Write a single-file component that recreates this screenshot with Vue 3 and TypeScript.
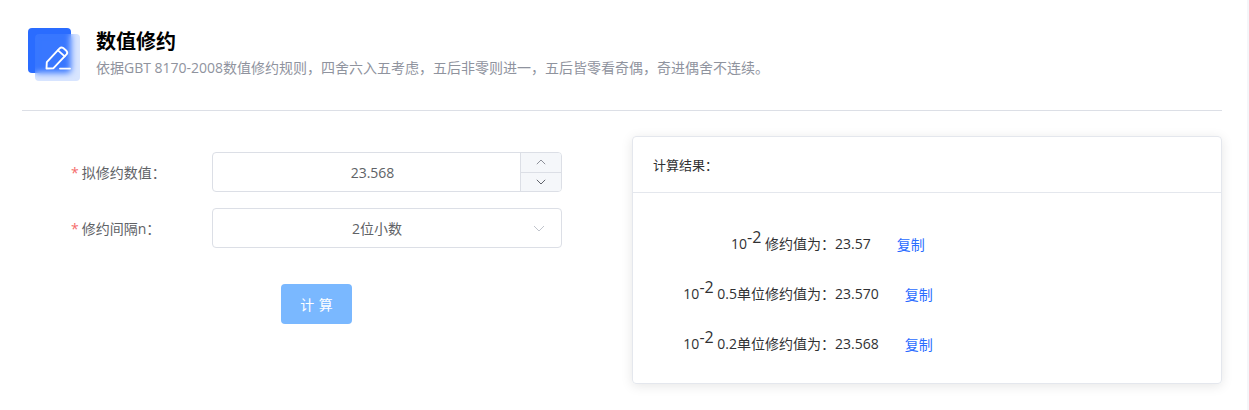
<script setup lang="ts">
interface Row { unit: string; value: string }
const rows: Row[] = [
  { unit: '修约值为\uFF1A', value: '23.57' },
  { unit: '0.5单位修约值为\uFF1A', value: '23.570' },
  { unit: '0.2单位修约值为\uFF1A', value: '23.568' },
]
</script>

<template>
  <div class="page">
    <header class="head">
      <div class="logo">
        <div class="logo-back"></div>
        <div class="logo-front">
          <svg width="28" height="28" viewBox="0 0 28 28" fill="none" stroke="#fff" stroke-width="1.9" stroke-linejoin="round" stroke-linecap="round">
            <path d="M2.5 24.5 L2.8 18.2 L15.6 4.4 Q17.3 2.7 19.2 4.1 L22.4 6.8 Q24.1 8.6 22.5 10.4 L9.5 24.2 Z" />
            <path d="M14 6.4 L20.7 12.4" />
            <path d="M16 24.6 H26" />
          </svg>
        </div>
      </div>
      <div class="head-text">
        <h1>数值修约</h1>
        <p>依据GBT 8170-2008数值修约规则&#xFF0C;四舍六入五考虑&#xFF0C;五后非零则进一&#xFF0C;五后皆零看奇偶&#xFF0C;奇进偶舍不连续。</p>
      </div>
    </header>

    <main class="body">
      <form class="form" @submit.prevent>
        <div class="field">
          <label><span class="star">*</span>拟修约数值&#xFF1A;</label>
          <div class="control number">
            <span class="val">23.568</span>
            <div class="steps">
              <button type="button" class="step">
                <svg width="10" height="6" viewBox="0 0 10 6" fill="none" stroke="#8d9099" stroke-width="1"><path d="M.8 5.2 5 1l4.2 4.2" /></svg>
              </button>
              <button type="button" class="step">
                <svg width="10" height="6" viewBox="0 0 10 6" fill="none" stroke="#60636b" stroke-width="1"><path d="M.8.8 5 5 9.2.8" /></svg>
              </button>
            </div>
          </div>
        </div>
        <div class="field">
          <label><span class="star">*</span>修约间隔n&#xFF1A;</label>
          <div class="control select">
            <span class="val">2位小数</span>
            <svg class="caret" width="12" height="7" viewBox="0 0 12 7" fill="none" stroke="#c0c4cc" stroke-width="1"><path d="M1 1l5 5 5-5" /></svg>
          </div>
        </div>
        <button type="button" class="submit">计 算</button>
      </form>

      <section class="card">
        <div class="card-head">计算结果&#xFF1A;</div>
        <div class="card-body">
          <div v-for="r in rows" :key="r.unit" class="row">
            <span class="label">10<sup>-2</sup> {{ r.unit }}</span>
            <span class="value">{{ r.value }}</span>
            <a class="copy">复制</a>
          </div>
        </div>
      </section>
    </main>
  </div>
</template>

<style scoped>
.page {
  box-sizing: border-box;
  width: 1249px;
  height: 410px;
  overflow: hidden;
  padding: 0 25px 0 22px;
  border-right: 2px solid #f5f6f9;
  background: #fff;
  font-family: "Open Sans", "Noto Sans CJK SC", sans-serif;
  font-size: 14px;
  color: #303133;
}
.head {
  height: 111px;
  box-sizing: border-box;
  border-bottom: 1px solid #dcdfe6;
  display: flex;
  padding: 28px 0 0 6px;
}
.logo {
  position: relative;
  width: 52px;
  height: 53px;
  flex: none;
}
.logo-back {
  width: 43px;
  height: 45px;
  border-radius: 4px;
  background: #2a6cff;
}
.logo-front {
  position: absolute;
  left: 7px;
  top: 6px;
  width: 45px;
  height: 47px;
  border-radius: 4px;
  background: rgba(100, 150, 255, 0.25);
  backdrop-filter: blur(3px);
  display: flex;
  align-items: center;
  justify-content: center;
}
.head-text {
  margin-left: 16px;
  padding-top: 1px;
}
h1 {
  margin: 0;
  font-size: 20px;
  line-height: 26px;
  font-weight: 700;
  color: #000;
}
p {
  margin: 3px 0 0;
  font-size: 14px;
  line-height: 20px;
  color: #8f939e;
}
.body {
  display: flex;
  padding-top: 25px;
}
.form {
  width: 610px;
  flex: none;
  padding-top: 16px;
}
.field {
  display: flex;
  align-items: center;
  height: 40px;
  margin-bottom: 16px;
  padding-left: 49px;
}
label {
  width: 141px;
  flex: none;
  color: #606266;
}
.star {
  color: #f56c6c;
  margin-right: 3px;
}
.control {
  position: relative;
  box-sizing: border-box;
  width: 350px;
  height: 40px;
  border: 1px solid #dcdfe6;
  border-radius: 4px;
  display: flex;
  align-items: center;
  justify-content: center;
  color: #606266;
}
.number {
  padding-right: 29px;
}
.select {
  padding-right: 20px;
}
.steps {
  position: absolute;
  top: 0;
  right: 0;
  bottom: 0;
  width: 40px;
  display: flex;
  flex-direction: column;
  border-left: 1px solid #dcdfe6;
  background: #f5f7fa;
  border-radius: 0 3px 3px 0;
}
.step {
  flex: 1;
  padding: 0;
  border: 0;
  background: none;
  display: flex;
  align-items: center;
  justify-content: center;
}
.step + .step {
  border-top: 1px solid #dcdfe6;
}
.caret {
  position: absolute;
  right: 16px;
  top: 16px;
}
.submit {
  display: block;
  margin: 36px 0 0 259px;
  width: 71px;
  height: 40px;
  border: 0;
  border-radius: 4px;
  background: #7ab8ff;
  color: #fff;
  font: inherit;
  word-spacing: 1px;
}
.card {
  box-sizing: border-box;
  width: 590px;
  height: 248px;
  border: 1px solid #e4e7ed;
  border-radius: 4px;
  box-shadow: 0 2px 12px rgba(0, 0, 0, 0.1);
}
.card-head {
  height: 56px;
  box-sizing: border-box;
  padding: 18px 20px 0;
  line-height: 20px;
  font-size: 13px;
  border-bottom: 1px solid #e4e7ed;
}
.card-body {
  padding-top: 26px;
}
.row {
  display: flex;
  align-items: baseline;
  height: 50px;
  line-height: 50px;
  white-space: nowrap;
}
.label {
  width: 202px;
  flex: none;
  text-align: right;
}
.label sup {
  font-size: 16px;
  line-height: 0;
}
.copy {
  margin-left: 26px;
  align-self: flex-start;
  line-height: 52px;
  color: #2a6cff;
  font-size: 14px;
}
</style>
